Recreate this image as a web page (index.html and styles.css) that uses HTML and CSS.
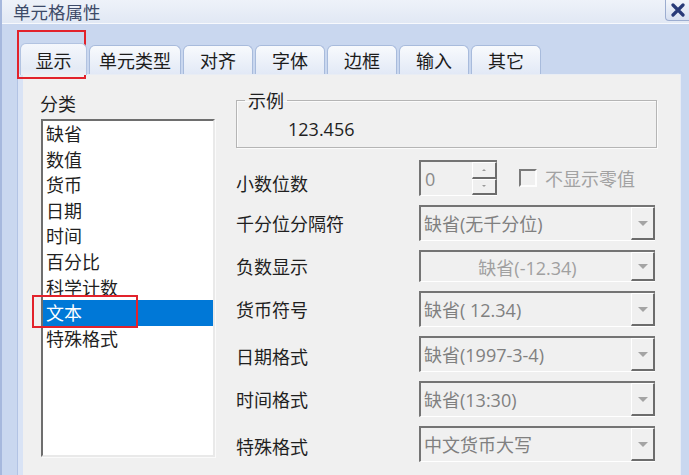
FILE: index.html
```html
<!DOCTYPE html>
<html lang="zh-CN">
<head>
<meta charset="utf-8">
<title>单元格属性</title>
<link rel="stylesheet" href="styles.css">
</head>
<body>
<div class="window">
  <div class="titlebar">
    <span class="title">单元格属性</span>
    <span class="close"><svg width="14" height="14" viewBox="0 0 14 14"><path d="M2 2 L12 12 M12 2 L2 12" stroke="#283a78" stroke-width="3.2" stroke-linecap="round"/></svg></span>
  </div>
  <div class="tabs">
    <div class="tab active">显示</div>
    <div class="tab">单元类型</div>
    <div class="tab">对齐</div>
    <div class="tab">字体</div>
    <div class="tab">边框</div>
    <div class="tab">输入</div>
    <div class="tab">其它</div>
  </div>
  <div class="panel">
    <div class="cat">
      <div class="cat-label">分类</div>
      <ul class="list">
        <li>缺省</li>
        <li>数值</li>
        <li>货币</li>
        <li>日期</li>
        <li>时间</li>
        <li>百分比</li>
        <li>科学计数</li>
        <li class="sel">文本</li>
        <li>特殊格式</li>
      </ul>
    </div>
    <div class="opts">
      <fieldset class="sample">
        <legend>示例</legend>
        <div class="sample-val">123.456</div>
      </fieldset>
      <div class="form">
        <div class="lbl lbl-first">小数位数</div>
        <div class="ctl-row">
          <div class="spin">
            <span class="spin-val">0</span>
            <div class="spin-btns">
              <span class="sb"><i class="tri-up"></i></span>
              <span class="sb"><i class="tri-down"></i></span>
            </div>
          </div>
          <div class="chk"><span class="box"></span><span class="chk-text">不显示零值</span></div>
        </div>

        <div class="lbl">千分位分隔符</div>
        <div class="combo"><span class="combo-text">缺省(无千分位)</span><span class="combo-btn"><i class="arrow"></i></span></div>

        <div class="lbl">负数显示</div>
        <div class="combo"><span class="combo-text center">缺省(-12.34)</span><span class="combo-btn"><i class="arrow"></i></span></div>

        <div class="lbl">货币符号</div>
        <div class="combo"><span class="combo-text">缺省( 12.34)</span><span class="combo-btn"><i class="arrow"></i></span></div>

        <div class="lbl lbl-low">日期格式</div>
        <div class="combo"><span class="combo-text">缺省(1997-3-4)</span><span class="combo-btn"><i class="arrow"></i></span></div>

        <div class="lbl">时间格式</div>
        <div class="combo"><span class="combo-text">缺省(13:30)</span><span class="combo-btn"><i class="arrow"></i></span></div>

        <div class="lbl lbl-low">特殊格式</div>
        <div class="combo"><span class="combo-text">中文货币大写</span><span class="combo-btn"><i class="arrow"></i></span></div>
      </div>
    </div>
  </div>
  <div class="mark mark-tab"></div>
  <div class="mark mark-item"></div>
</div>
</body>
</html>
```

FILE: styles.css
```css
html, body {
  margin: 0;
  padding: 0;
}
body {
  width: 689px;
  height: 475px;
  overflow: hidden;
  font-family: "Open Sans", "Noto Sans CJK SC", sans-serif;
  font-size: 18px;
  color: #1f1f1f;
}
.window {
  position: relative;
  width: 689px;
  height: 475px;
  box-sizing: border-box;
  background: #c9d7ef;
  border-left: 2px solid #a6b8dd;
  display: flex;
  flex-direction: column;
}
.titlebar {
  height: 23px;
  flex: none;
  display: flex;
  justify-content: space-between;
  align-items: flex-start;
  background: linear-gradient(#eef2f9, #e1e8f4);
  border-bottom: 1px solid #f7f9fd;
}
.title {
  padding-left: 11px;
  padding-top: 1px;
  line-height: 22px;
  font-size: 17.5px;
  color: #3d4a68;
  font-family: "Noto Sans CJK SC", sans-serif;
}
.close {
  width: 24px;
  height: 21px;
  box-sizing: border-box;
  display: flex;
  align-items: center;
  justify-content: center;
  border: 1px solid #9cadd0;
  border-top: none;
  border-right: none;
  border-radius: 0 0 0 4px;
  background: linear-gradient(#f3f6fb, #d6dff0);
}
.tabs {
  flex: none;
  display: flex;
  align-items: flex-end;
  gap: 2px;
  padding-left: 18px;
  margin-top: 19px;
  height: 31px;
}
.tab {
  height: 29px;
  box-sizing: border-box;
  min-width: 70px;
  padding: 0 9px;
  text-align: center;
  line-height: 28px;
  border: 1px solid #a8bbdc;
  border-bottom: none;
  border-radius: 6px 6px 0 0;
  background: linear-gradient(#f8fafd, #e2e9f6);
  color: #1c1c1c;
  font-family: "Noto Sans CJK SC", sans-serif;
}
.tab.active {
  min-width: 67px;
  height: 32px;
  margin-bottom: -1px;
  position: relative;
  z-index: 1;
  line-height: 32px;
  background: linear-gradient(#f4f7fc, #e4eaf5 80%, #eceff5);
  border-color: #b2c3e1;
}
.panel {
  flex: 1;
  display: flex;
  margin-left: 15px;
  margin-right: 8px;
  background: #f0f0f0;
  border-top: 1px solid #e9edf4;
  border-right: 1px solid #e6ebf5;
  border-left: 1px solid #b2c3e4;
  box-shadow: inset 5px 0 0 #d9e3f5;
}
.cat {
  width: 174px;
  margin-left: 23px;
  padding-top: 18px;
  font-family: "Noto Sans CJK SC", sans-serif;
}
.cat-label {
  line-height: 20px;
  margin-left: -1px;
}
.list {
  list-style: none;
  margin: 6px 0 0;
  padding: 0;
  height: 338px;
  box-sizing: border-box;
  background: #fff;
  border-style: solid;
  border-width: 2px;
  border-color: #6e6e6e #e9e9e9 #e9e9e9 #6e6e6e;
  box-shadow: 1px 1px 0 #fafafa;
}
.list li {
  height: 25.6px;
  line-height: 25.6px;
  padding-left: 3px;
  white-space: nowrap;
}
.list li.sel {
  background: #0078d7;
  color: #fff;
}
.opts {
  width: 421px;
  margin-left: 21px;
}
.sample {
  margin: 15px 0 0;
  padding: 9px 0 8px 0;
  border: 1px solid #b5b5b5;
  box-shadow: inset 1px 1px 0 #fbfbfb, 1px 1px 0 #fbfbfb;
  min-width: 0;
}
.sample legend {
  padding: 0 3px;
  margin-left: 8px;
  line-height: 20px;
  font-family: "Noto Sans CJK SC", sans-serif;
}
.sample-val {
  padding-left: 51px;
  line-height: 20px;
}
.form {
  margin-top: 12px;
  display: grid;
  grid-template-columns: 183px 236px;
  grid-template-rows: 36px 36px 32px 36px 36px 36px 36px;
  row-gap: 9px;
}
.lbl {
  align-self: center;
  line-height: 20px;
  font-family: "Noto Sans CJK SC", sans-serif;
}
.lbl-first {
  padding-top: 10px;
}
.lbl-low {
  padding-top: 3px;
}
.ctl-row {
  display: flex;
  align-items: center;
}
.spin {
  width: 78px;
  height: 36px;
  box-sizing: border-box;
  display: flex;
  border-style: solid;
  border-width: 2px 0 1px 2px;
  border-color: #747474 #fff #fff #747474;
}
.spin-val {
  flex: 1;
  align-self: center;
  padding-left: 4px;
  line-height: 20px;
  color: #8a8a8a;
}
.spin-btns {
  width: 25px;
  display: flex;
  flex-direction: column;
}
.sb {
  flex: 1;
  box-sizing: border-box;
  display: flex;
  align-items: center;
  justify-content: center;
  border-style: solid;
  border-width: 1px 2px 2px 1px;
  border-color: #fff #6c6c6c #6c6c6c #fff;
}
.tri-up {
  width: 0;
  height: 0;
  border-left: 2px solid transparent;
  border-right: 2px solid transparent;
  border-bottom: 2px solid #9a9a9a;
}
.tri-down {
  width: 0;
  height: 0;
  border-left: 2px solid transparent;
  border-right: 2px solid transparent;
  border-top: 2px solid #9a9a9a;
}
.chk {
  display: flex;
  align-items: center;
  margin-left: 22px;
}
.box {
  width: 18px;
  height: 18px;
  box-sizing: border-box;
  border-style: solid;
  border-width: 2px;
  border-color: #7a7a7a #fdfdfd #fdfdfd #7a7a7a;
  background: #f0f0f0;
}
.chk-text {
  margin-left: 8px;
  color: #a2a2a2;
  line-height: 20px;
  font-family: "Noto Sans CJK SC", sans-serif;
  white-space: nowrap;
}
.combo {
  display: flex;
  box-sizing: border-box;
  border-style: solid;
  border-width: 2px 0 1px 2px;
  border-color: #747474 #fff #fff #747474;
  background: #f0f0f0;
}
.combo-text {
  flex: 1;
  align-self: center;
  padding-left: 3px;
  line-height: 20px;
  color: #808080;
  white-space: nowrap;
}
.combo-text.center {
  text-align: center;
  color: #a0a0a0;
  padding-top: 2px;
}
.combo-btn {
  width: 24px;
  box-sizing: border-box;
  display: flex;
  align-items: center;
  justify-content: center;
  border-style: solid;
  border-width: 1px 2px 2px 1px;
  border-color: #fff #6c6c6c #6c6c6c #fff;
}
.arrow {
  width: 0;
  height: 0;
  border-left: 5px solid transparent;
  border-right: 5px solid transparent;
  border-top: 5px solid #a4a4a4;
}
.mark {
  position: absolute;
  box-sizing: border-box;
  border: 2px solid #e2222b;
}
.mark-tab {
  left: 15px;
  top: 30px;
  width: 69px;
  height: 49px;
}
.mark-item {
  left: 30px;
  top: 295px;
  width: 106px;
  height: 33px;
}
```
